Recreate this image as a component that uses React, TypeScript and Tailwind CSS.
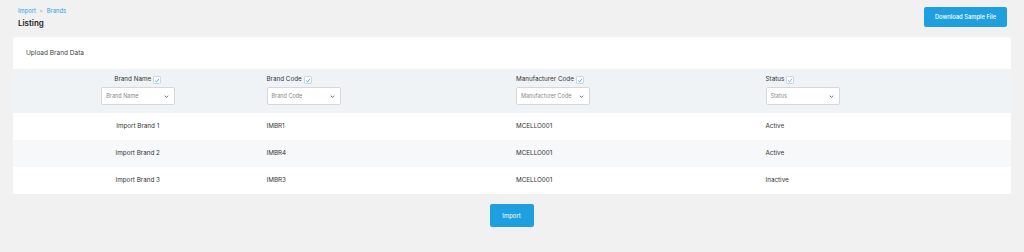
import React from "react";

const Check = () => (
  <span className="inline-flex items-center justify-center w-[8px] h-[8px] border border-[#cfd8e0] bg-white ml-[2px] rounded-[1px]">
    <svg viewBox="0 0 10 10" className="w-[7px] h-[7px]">
      <path d="M2 5.2 L4.2 7.3 L8.3 2.3" fill="none" stroke="#2aa3e6" strokeWidth="1.3" />
    </svg>
  </span>
);

const Select = ({ label }: { label: string }) => (
  <div className="w-[74px] h-[18px] border border-[#d4d8dd] bg-white rounded-[2px] flex items-center justify-between px-[4px]">
    <span className="text-[5.5px] text-[#8a8a8a]">{label}</span>
    <svg viewBox="0 0 10 10" className="w-[7px] h-[7px]">
      <path d="M2.5 3.8 L5 6.2 L7.5 3.8" fill="none" stroke="#555" strokeWidth="1.2" />
    </svg>
  </div>
);

const rows = [
  ["Import Brand 1", "IMBR1", "MCELLO001", "Active"],
  ["Import Brand 2", "IMBR4", "MCELLO001", "Active"],
  ["Import Brand 3", "IMBR3", "MCELLO001", "Inactive"],
];

export default function App() {
  return (
    <div className="w-[1024px] h-[252px] bg-[#f1f1f1] overflow-hidden" style={{ fontFamily: "Inter, 'Noto Sans', sans-serif" }}>
      <div className="flex items-start justify-between pl-[18px] pr-[17px] pt-[7px]">
        <div>
          <div className="flex items-center gap-[4px] text-[5.8px] text-[#2aa3e6] leading-[8px]">
            <span>Import</span>
            <span className="text-[#9aa] text-[5px]">»</span>
            <span>Brands</span>
          </div>
          <div className="text-[8px] font-semibold text-[#222] mt-[3px] leading-[10px]">Listing</div>
        </div>
        <button className="w-[83px] h-[20px] bg-[#1e9fdf] rounded-[2px] text-white text-[5.8px] font-medium">
          Download Sample File
        </button>
      </div>
      <div className="mx-[13px] mt-[9px] bg-white rounded-[3px] w-[998px]">
        <div className="h-[32px] flex items-center pl-[13px] pt-[2px] text-[6.5px] text-[#444]">Upload Brand Data</div>
        <div className="grid grid-cols-4 bg-[#f0f3f6] h-[44px]">
          <div className="flex flex-col items-center pt-[6px]">
            <div className="flex items-center text-[6.3px] text-[#333] h-[10px]">Brand Name<Check /></div>
            <div className="mt-[2px] pl-[1px]"><Select label="Brand Name" /></div>
          </div>
          {["Brand Code", "Manufacturer Code", "Status"].map((h) => (
            <div key={h} className="flex flex-col items-start pt-[6px] pl-[4px]">
              <div className="flex items-center text-[6.3px] text-[#333] h-[10px]">{h}<Check /></div>
              <div className="mt-[2px]"><Select label={h} /></div>
            </div>
          ))}
        </div>
        {rows.map((r, i) => (
          <div key={i} className={`grid grid-cols-4 h-[27px] items-center text-[6.3px] text-[#333] ${i === 1 ? "bg-[#f6f8fa]" : "bg-white"}`}>
            <div className="text-center">{r[0]}</div>
            <div className="pl-[4px]">{r[1]}</div>
            <div className="pl-[4px]">{r[2]}</div>
            <div className="pl-[4px]">{r[3]}</div>
          </div>
        ))}
      </div>
      <div className="flex justify-center mt-[10px]">
        <button className="w-[44px] h-[23px] bg-[#1e9fdf] rounded-[2px] text-white text-[6px] ml-[-1px]">Import</button>
      </div>
    </div>
  );
}
